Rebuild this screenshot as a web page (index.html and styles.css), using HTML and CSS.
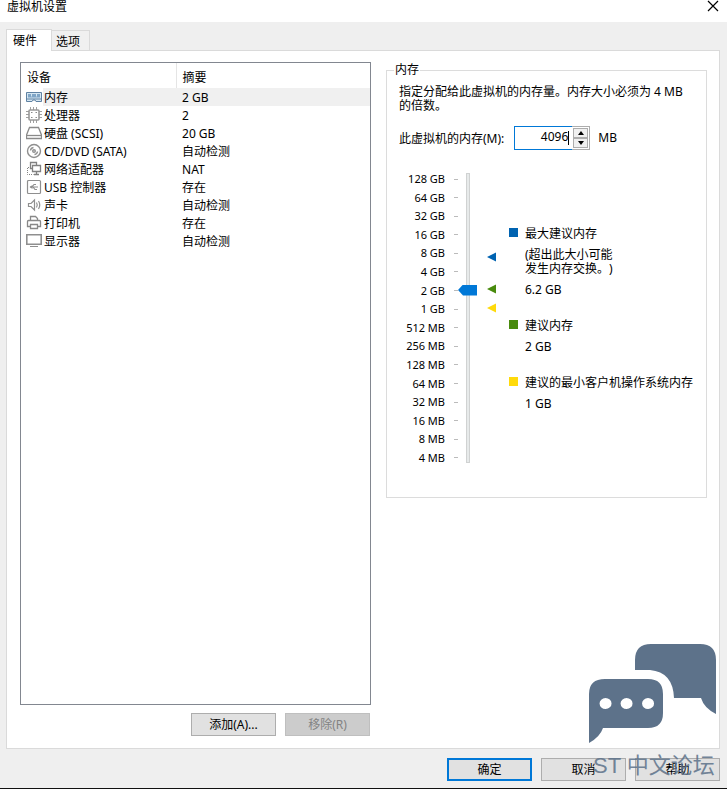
FILE: index.html
```html
<!DOCTYPE html>
<html lang="zh-CN">
<head>
  <meta charset="UTF-8">
  <title>虚拟机设置</title>
  <link rel="stylesheet" href="styles.css">
</head>
<body>

  <header class="titlebar">
    <h1>虚拟机设置</h1>
    <button class="close" aria-label="关闭">
      <svg width="12" height="12" viewBox="0 0 12 12"><path d="M1 1l10 10M11 1L1 11" stroke="#000" stroke-width="1.2"/></svg>
    </button>
  </header>

  <main>
    <div class="tabs" role="tablist">
      <button class="tab active" role="tab" aria-selected="true">硬件</button>
      <button class="tab" role="tab" aria-selected="false">选项</button>
    </div>

    <div class="panel">
      <section class="devices">
        <div class="device-list">
          <table>
            <colgroup>
              <col class="col-icon">
              <col class="col-name">
              <col>
            </colgroup>
            <thead>
              <tr><th class="name-head" colspan="2">设备</th><th class="summary">摘要</th></tr>
            </thead>
            <tbody>
              <tr class="selected">
                <td class="icon"><svg width="16" height="16" viewBox="0 0 16 16"><path d="M.5 3.500h15v9H10l-1-1.500H7L6 12.500H.5z" fill="#d5e6f2" stroke="#5f82a3"/><path d="M2 5h12v3.500H2z" fill="#7fa5c6"/><path d="M5.500 5v2.500M10.500 5v2.500" stroke="#d5e6f2"/><path d="M1 10h14" stroke="#5f82a3"/></svg></td>
                <td>内存</td><td class="summary">2 GB</td>
              </tr>
              <tr>
                <td class="icon"><svg width="16" height="16" viewBox="0 0 16 16" fill="none" stroke="#8a8a8a"><path d="M4.500 0v3M7.500 0v3M10.500 0v3M4.500 13v3M7.500 13v3M10.500 13v3M0 4.500h3M0 7.500h3M0 10.500h3M13 4.500h3M13 7.500h3M13 10.500h3" stroke="#a0a0a0"/><rect x="3" y="3" width="10" height="10" rx="1" stroke="#999" stroke-width="1.600"/><path d="M5 5.500h1.500M9.500 5.500H11M5 10.500h1.500M9.500 10.500H11"/></svg></td>
                <td>处理器</td><td class="summary">2</td>
              </tr>
              <tr>
                <td class="icon"><svg width="16" height="16" viewBox="0 0 16 16" fill="none" stroke="#8a8a8a" stroke-width="1.300"><path d="M3.500 2.500h9l3 7.500v3.500H.5V10z"/><path d="M1 10.500h14"/></svg></td>
                <td>硬盘 (SCSI)</td><td class="summary">20 GB</td>
              </tr>
              <tr>
                <td class="icon"><svg width="16" height="16" viewBox="0 0 16 16" fill="none" stroke="#8f8f8f" stroke-width="1.400"><circle cx="8" cy="8" r="6.500"/><circle cx="8" cy="8" r="1.300"/><path d="M4.500 7.500a3.500 3.500 0 0 1 3-3M11.500 8.500a3.500 3.500 0 0 1-3 3"/></svg></td>
                <td>CD/DVD (SATA)</td><td class="summary">自动检测</td>
              </tr>
              <tr>
                <td class="icon"><svg width="16" height="16" viewBox="0 0 16 16" fill="none" stroke="#808080"><path d="M6.500 7.500h-2v-6h6v3" stroke-width="1.300"/><path d="M6.500 4.500h8v6h-8zM8 13.500h5M10.500 11v2" stroke-width="1.300"/><path d="M3 6.500H1.500v7h6" stroke-dasharray="1 1"/></svg></td>
                <td>网络适配器</td><td class="summary">NAT</td>
              </tr>
              <tr>
                <td class="icon"><svg width="16" height="16" viewBox="0 0 16 16" fill="none" stroke="#8f8f8f" stroke-width="1.200"><rect x="1.500" y="1.500" width="13" height="13" rx="1"/><path d="M4 8h8M6 8l2-2.500h2M7 8l2 2.500h2"/><path d="M3.500 8L6.500 6v4z" fill="#8f8f8f" stroke="none"/></svg></td>
                <td>USB 控制器</td><td class="summary">存在</td>
              </tr>
              <tr>
                <td class="icon"><svg width="16" height="16" viewBox="0 0 16 16" fill="none" stroke="#8f8f8f" stroke-width="1.200"><path d="M2.500 6.500H5L8.500 3v10L5 9.500H2.500z"/><path d="M10.500 5.500q1.500 2.500 0 5M12.500 4q2.500 4 0 8"/></svg></td>
                <td>声卡</td><td class="summary">自动检测</td>
              </tr>
              <tr>
                <td class="icon"><svg width="16" height="16" viewBox="0 0 16 16" fill="none" stroke="#888" stroke-width="1.300"><path d="M4.500 5.500v-4h5l2 2v2M4.500 11.500h-3v-5q0-1 1-1h11q1 0 1 1v5h-3"/><path d="M4.500 9.500h7v4h-7z"/></svg></td>
                <td>打印机</td><td class="summary">存在</td>
              </tr>
              <tr>
                <td class="icon"><svg width="16" height="16" viewBox="0 0 16 16" fill="none" stroke="#8f8f8f"><path d="M.8 1.800h14.400v9.400H.8z" stroke-width="1.600"/><path d="M4 13.500h8"/></svg></td>
                <td>显示器</td><td class="summary">自动检测</td>
              </tr>
            </tbody>
          </table>
        </div>
        <div class="device-actions">
          <button class="btn">添加(A)...</button>
          <button class="btn" disabled>移除(R)</button>
        </div>
      </section>

      <fieldset class="memory">
        <legend>内存</legend>
        <p class="hint">指定分配给此虚拟机的内存量。内存大小必须为 4 MB 的倍数。</p>
        <div class="amount">
          <label for="memory-size">此虚拟机的内存(M):</label>
          <div class="spinner">
            <input type="text" id="memory-size" value="4096">
            <div class="arrows">
              <button aria-label="增加"><svg width="6" height="4" viewBox="0 0 6 4"><path d="M3 0l3 4H0z"/></svg></button>
              <button aria-label="减少"><svg width="6" height="4" viewBox="0 0 6 4"><path d="M0 0h6L3 4z"/></svg></button>
            </div>
          </div>
          <span>MB</span>
        </div>

        <div class="scale">
          <ul class="ticks">
            <li>128 GB</li>
            <li>64 GB</li>
            <li>32 GB</li>
            <li>16 GB</li>
            <li>8 GB</li>
            <li>4 GB</li>
            <li>2 GB</li>
            <li>1 GB</li>
            <li>512 MB</li>
            <li>256 MB</li>
            <li>128 MB</li>
            <li>64 MB</li>
            <li>32 MB</li>
            <li>16 MB</li>
            <li>8 MB</li>
            <li>4 MB</li>
          </ul>
          <input type="range" class="slider" min="0" max="15" value="9" aria-label="内存大小">
          <div class="markers">
            <svg class="max" width="10" height="10" viewBox="0 0 10 10"><path d="M0 5l9-4.500v9z"/></svg>
            <svg class="recommended" width="10" height="10" viewBox="0 0 10 10"><path d="M0 5l9-4.500v9z"/></svg>
            <svg class="min" width="10" height="10" viewBox="0 0 10 10"><path d="M0 5l9-4.500v9z"/></svg>
          </div>
          <dl class="legend">
            <dt class="max">最大建议内存</dt>
            <dd>(超出此大小可能<br>发生内存交换。)</dd>
            <dd>6.2 GB</dd>
            <dt class="recommended">建议内存</dt>
            <dd>2 GB</dd>
            <dt class="min">建议的最小客户机操作系统内存</dt>
            <dd>1 GB</dd>
          </dl>
        </div>
      </fieldset>
    </div>
  </main>

  <footer>
    <button class="btn default">确定</button>
    <button class="btn">取消</button>
    <button class="btn">帮助</button>
  </footer>

  <div class="watermark">
    <svg width="128" height="100" viewBox="0 0 128 100" fill="#5d728a">
      <path d="M46 26V16Q46 0 62 0H111Q127 0 127 16V70Q115 64 112 54H85Q84 28 61 26Z"/>
      <path fill-rule="evenodd" d="M16 35H59Q74 35 74 50V69Q74 84 59 84H14Q11 93 0 99V50Q0 35 16 35ZM16.500 54a6 5.500 0 1 0 .1 11a6 5.500 0 1 0-.1-11ZM37.500 54a6 5.500 0 1 0 .1 11a6 5.500 0 1 0-.1-11ZM59 54a6 5.500 0 1 0 .1 11a6 5.500 0 1 0-.1-11Z"/>
    </svg>
    <span>ST 中文论坛</span>
  </div>

</body>
</html>
```
FILE: styles.css
```css
* {
  box-sizing: border-box;
}

body {
  margin: 0;
  min-height: 100vh;
  display: flex;
  flex-direction: column;
  position: relative;
  background: #efefef;
  border-bottom: 1px solid #111;
  color: #000;
  font-family: "Noto Sans", "Noto Sans CJK SC", sans-serif;
  font-size: 12px;
  line-height: 14px;
  text-spacing-trim: space-all;
}

button, input {
  font: inherit;
  color: inherit;
}

.titlebar {
  display: flex;
  justify-content: space-between;
  height: 22px;
  padding: 0 8px 0 7px;
  background: #fff;
}

.titlebar h1 {
  margin: 0;
  font-size: 12px;
  font-weight: normal;
}

.close {
  height: 12px;
  padding: 0;
  border: none;
  background: none;
}

.close svg {
  display: block;
}

main {
  flex: 1;
  display: flex;
  flex-direction: column;
  padding: 7px 7px 0 6px;
}

.tabs {
  display: flex;
  align-items: flex-end;
}

.tab {
  height: 20px;
  padding: 2px 9px 0 4px;
  border: 1px solid #dadada;
  border-width: 1px 1px 0 0;
  background: #f0f0f0;
}

.tab.active {
  height: 22px;
  margin-bottom: -1px;
  padding: 0 14px 0 6px;
  border-left-width: 1px;
  background: #fff;
  z-index: 1;
}

.panel {
  flex: 1;
  display: grid;
  grid-template-columns: 351fr 321fr;
  gap: 15px;
  padding: 11px 12px 12px 13px;
  border: 1px solid #dadada;
  background: #fff;
}

.devices {
  display: flex;
  flex-direction: column;
}

.device-list {
  flex: 1;
  border: 1px solid #828790;
}

table {
  width: 100%;
  table-layout: fixed;
  border-collapse: collapse;
}

.col-icon {
  width: 22px;
}

.col-name {
  width: 133px;
}

th, td {
  height: 18px;
  padding: 2px 0 0 1px;
  text-align: left;
  font-weight: normal;
}

th {
  height: 25px;
  padding-top: 4px;
}

.name-head {
  padding-left: 6px;
  border-right: 1px solid #e5e5e5;
}

th.summary, td.summary {
  padding-left: 6px;
}

.icon {
  padding: 0 0 0 5px;
}

.icon svg {
  display: block;
}

.selected td:not(.icon) {
  background: #f0f0f0;
}

.device-actions {
  display: flex;
  justify-content: flex-end;
  gap: 9px;
  padding: 8px 1px 0 0;
}

.btn {
  width: 85px;
  height: 23px;
  padding: 1px 0 0;
  border: 1px solid #adadad;
  background: #e1e1e1;
}

.btn:disabled {
  background: #ccc;
  border-color: #bfbfbf;
  color: #838383;
}

.btn.default {
  border: 2px solid #0078d7;
}

.memory {
  align-self: start;
  min-width: 0;
  margin: 1px 0 0;
  padding: 8px 12px 32px;
  border: 1px solid #dcdcdc;
}

.memory legend {
  margin-left: -5px;
  padding: 0 1px;
}

.hint {
  margin: 0;
}

.amount {
  display: flex;
  align-items: center;
  gap: 8px;
  padding: 13px 0 22px;
}

.amount label {
  padding: 2px 2px 0 0;
}

.spinner {
  display: flex;
  width: 76px;
  height: 24px;
}

/* the thin bar on the right is the text cursor */
.spinner input {
  flex: 1;
  min-width: 0;
  padding: 0 4px 2px;
  border: 1px solid #0078d7;
  border-right: none;
  border-radius: 0;
  outline: none;
  text-align: right;
  background: linear-gradient(#000, #000) right 3px center / 1px 14px no-repeat #fff;
}

.arrows {
  display: flex;
  flex-direction: column;
  width: 18px;
  padding: 1px;
  border: 1px solid #adadad;
  border-left: none;
}

.arrows button {
  flex: 1;
  display: flex;
  align-items: center;
  justify-content: center;
  padding: 0;
  border: 1px solid #adadad;
  background: #f0f0f0;
}

.scale {
  display: flex;
  align-items: flex-start;
}

.ticks {
  display: flex;
  flex-direction: column;
  justify-content: space-between;
  width: 59px;
  height: 293px;
  margin: 0;
  padding: 0;
  list-style: none;
  font-size: 11px;
}

.ticks li {
  display: flex;
  align-items: center;
  justify-content: flex-end;
  gap: 9px;
}

.ticks li::after {
  content: "";
  width: 4px;
  height: 1px;
  background: #bbb;
}

.slider {
  appearance: none;
  writing-mode: vertical-lr;
  direction: rtl;
  width: 19px;
  height: 290px;
  margin: 1px 0 0;
  background: linear-gradient(#e7eaea, #e7eaea) 9px 1px / 2px 288px no-repeat,
              linear-gradient(#d0d2d2, #d0d2d2) 8px 0 / 4px 290px no-repeat;
}

.slider::-webkit-slider-thumb {
  appearance: none;
  width: 19px;
  height: 11px;
  background: #0078d7;
  clip-path: polygon(0 50%, 5px 0, 100% 0, 100% 100%, 5px 100%);
}

.markers {
  display: flex;
  flex-direction: column;
  width: 10px;
  margin: 80px 12px 0 10px;
}

.markers svg {
  flex: none;
}

.markers .max {
  fill: #0063b1;
  margin-bottom: 22px;
}

.markers .recommended {
  fill: #498b0e;
  margin-bottom: 9px;
}

.markers .min {
  fill: #ffda0b;
}

.legend {
  margin: 55px 0 0;
  white-space: nowrap;
}

.legend dt {
  display: flex;
  align-items: center;
  gap: 7px;
}

.legend dt::before {
  content: "";
  width: 9px;
  height: 9px;
  margin-bottom: 3px;
}

.legend .max::before {
  background: #0063b1;
}

.legend .recommended::before {
  background: #498b0e;
}

.legend .min::before {
  background: #ffda0b;
}

.legend dd {
  margin: 7px 0 0 16px;
}

.legend dd + dt {
  margin-top: 22px;
}

footer {
  display: flex;
  justify-content: flex-end;
  gap: 9px;
  padding: 9px 7px 7px;
}

.watermark {
  position: absolute;
  right: 10px;
  bottom: 8px;
  width: 128px;
  color: #5d728a;
  font-family: "Liberation Sans", "Noto Sans CJK SC", sans-serif;
  font-size: 22px;
  line-height: 28px;
  white-space: nowrap;
  pointer-events: none;
}

.watermark svg {
  display: block;
  margin-bottom: 8px;
}

.watermark span {
  padding-left: 4px;
  opacity: 0.85;
}
```
